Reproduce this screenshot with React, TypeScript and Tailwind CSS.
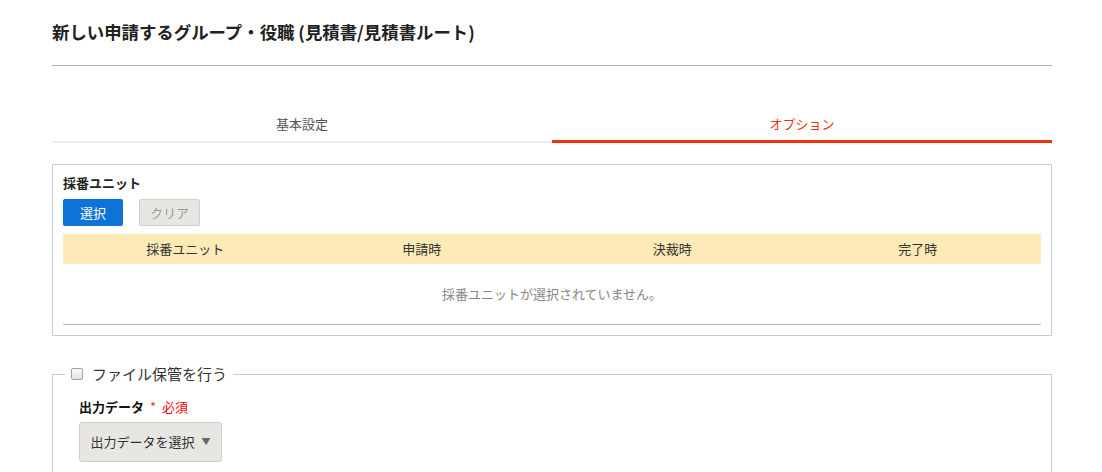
import React from "react";

const font = { fontFamily: '"Noto Sans CJK JP", "Noto Sans", sans-serif' };

export default function App() {
  return (
    <div className="w-[1102px] h-[472px] overflow-hidden bg-white text-[#333]" style={font}>
      <div className="px-[52px] w-[1104px]">
        <div className="h-[66px] border-b border-[#b3b3b3] flex items-start pt-[20px]">
          <h1 className="text-[17.4px] font-bold leading-[24px] text-[#222]">
            新しい申請するグループ・役職 (見積書/見積書ルート)
          </h1>
        </div>
        <div className="mt-[43px] flex">
          <div className="flex-1 h-[34px] flex items-start justify-center border-b-2 border-[#eeeeee] text-[13px] leading-[16px] pt-[7px] text-[#555]">
            基本設定
          </div>
          <div className="flex-1 h-[34px] flex items-start justify-center border-b-[3px] border-[#f2300e] text-[13px] leading-[16px] pt-[7px] text-[#f2300e] -mb-[1px]">
            オプション
          </div>
        </div>
        <div className="mt-[21px] border border-[#cccccc] px-[10px] pt-[9px] h-[172px]">
          <div className="text-[13px] font-bold leading-[18px] text-[#222]">採番ユニット</div>
          <div className="mt-[7px] flex gap-[16px]">
            <button className="w-[60px] h-[27px] rounded-[2px] bg-[#0b74d6] text-white text-[13px] leading-[27px]">
              選択
            </button>
            <button className="w-[61px] h-[27px] rounded-[2px] bg-[#e8e6e2] border border-[#d2d0cc] text-[#999] text-[13px] leading-[25px]">
              クリア
            </button>
          </div>
          <div className="mt-[8px]">
            <div className="grid grid-cols-4 h-[30px] bg-[#feeab7] text-[13px] leading-[30px] text-[#333]">
              <div className="text-center">採番ユニット</div>
              <div className="text-center -ml-[16px]">申請時</div>
              <div className="text-center -ml-[4px]">決裁時</div>
              <div className="text-center -ml-[2px]">完了時</div>
            </div>
            <div className="h-[61px] border-b border-[#b9b9b1] flex items-center justify-center text-[13px] text-[#888]">
              採番ユニットが選択されていません。
            </div>
          </div>
        </div>
        <fieldset className="mt-[28px] border border-[#cccccc] border-b-0 pl-[12px] pt-[14px] h-[120px]">
          <legend className="px-[6px] flex items-center gap-[9px] text-[15px] text-[#333] leading-[20px]">
            <span className="inline-block w-[12px] h-[12px] border border-[#a0a0a0] rounded-[2px] bg-gradient-to-b from-[#fafafa] to-[#e2e2e2]" />
            ファイル保管を行う
          </legend>
          <div className="ml-[14px]">
            <div className="text-[13px] leading-[18px] flex items-center">
              <span className="font-bold text-[#111]">出力データ</span>
              <span className="text-[#f33] ml-[6px]">*</span>
              <span className="text-[#f00] ml-[6px]">必須</span>
            </div>
            <button className="mt-[6px] w-[143px] h-[40px] rounded-[3px] bg-[#e8e6e2] border border-[#cfcdc9] text-[13px] text-[#333] flex items-center justify-center gap-[7px]">
              出力データを選択
              <span className="text-[9px] text-[#666]">▼</span>
            </button>
          </div>
        </fieldset>
      </div>
    </div>
  );
}
